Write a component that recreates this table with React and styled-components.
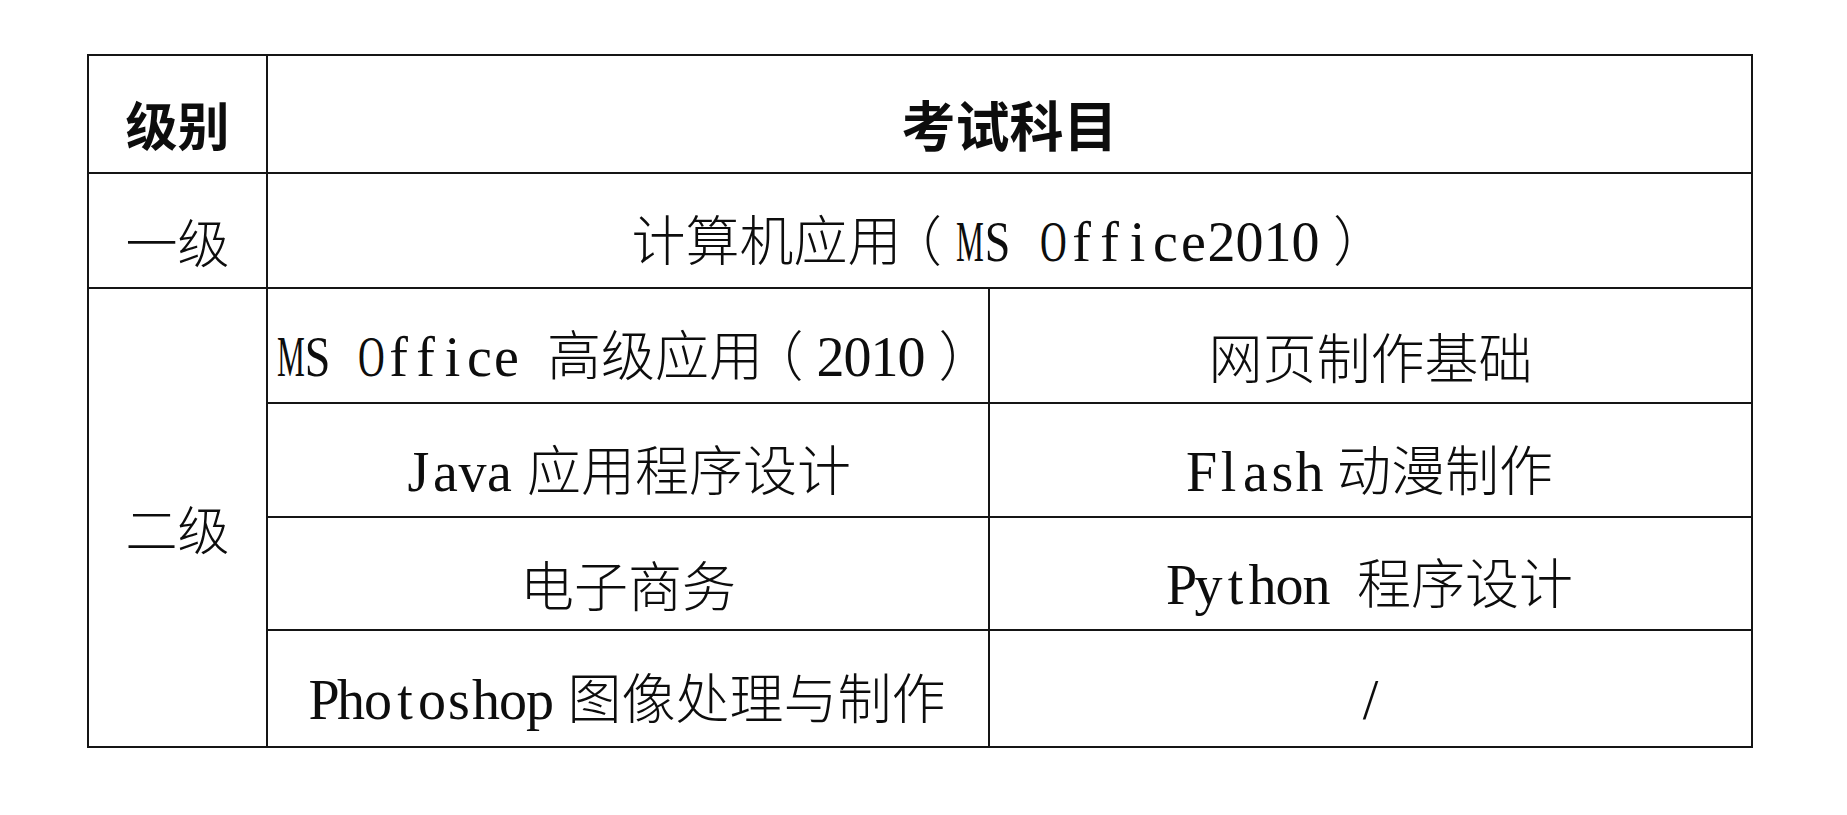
import React from 'react';
import styled, { createGlobalStyle } from 'styled-components';

const GlobalStyle = createGlobalStyle`
  html, body { margin: 0; padding: 0; background: #ffffff; }
  body { font-family: "Noto Sans CJK SC", sans-serif; color: #0d0d0d; }
`;

const Page = styled.div`
  width: 1847px;
  height: 815px;
  box-sizing: border-box;
  padding: 54px 0 0 87px;
  background: #ffffff;
`;

const Grid = styled.div`
  display: grid;
  grid-template-columns: 179px 722px 763px;
  grid-template-rows: 118px 115px 115px 114px 113px 117px;
  width: max-content;
  border-top: 2px solid #151515;
  border-left: 2px solid #151515;
`;

const Cell = styled.div`
  grid-column: ${(p) => p.$col || 'auto'};
  grid-row: ${(p) => p.$row || 'auto'};
  display: flex;
  align-items: center;
  justify-content: center;
  box-sizing: border-box;
  border-right: 2px solid #151515;
  border-bottom: 2px solid #151515;
  padding-top: 20px;
  padding-right: ${(p) => p.$shift || 0}px;
  font-family: "Noto Sans CJK SC", sans-serif;
  font-size: ${(p) => p.$size || 54}px;
  font-weight: ${(p) => (p.$bold ? 700 : 300)};
  line-height: 1;
  white-space: nowrap;
`;

const Line = styled.span`
  display: block;
  white-space: nowrap;
`;

const MonoCell = styled.span`
  display: inline-flex;
  justify-content: center;
  width: ${(p) => p.$w}px;
  font-family: "Liberation Serif", serif;
  font-size: 56px;
  font-weight: 400;
`;

const Shape = styled.span`
  display: inline-block;
  transform: scaleX(${(p) => p.$sx});
`;

const Gap = styled.span`
  display: inline-block;
  width: ${(p) => p.$w}px;
`;

const ParenBox = styled.span`
  display: inline-flex;
  justify-content: center;
  width: ${(p) => p.$w || 54}px;
`;

const ParenGlyph = styled.span`
  font-feature-settings: "halt" 1;
`;

const SCALE = { M: 0.56, O: 0.66, S: 0.82, W: 0.56 };

function Latin({ text, w = 27 }) {
  return (
    <>
      {Array.from(text).map((ch, i) => (
        <MonoCell key={i} $w={w}>
          <Shape $sx={SCALE[ch] || 1}>{ch === ' ' ? '\u00a0' : ch}</Shape>
        </MonoCell>
      ))}
    </>
  );
}

function Paren({ children, w }) {
  return (
    <ParenBox $w={w}>
      <ParenGlyph>{children}</ParenGlyph>
    </ParenBox>
  );
}

export default function App() {
  return (
    <>
      <GlobalStyle />
      <Page>
        <Grid>
          <Cell $col="1" $row="1" $size={52} $bold>
            <Line>级别</Line>
          </Cell>
          <Cell $col="2 / 4" $row="1" $bold>
            <Line>考试科目</Line>
          </Cell>

          <Cell $col="1" $row="2" $size={52}>
            <Line>一级</Line>
          </Cell>
          <Cell $col="2 / 4" $row="2" $shift={14}>
            <Line>
              计算机应用<Paren>（</Paren>
              <Latin text="MS Office2010" w={28} />
              <Paren>）</Paren>
            </Line>
          </Cell>

          <Cell $col="1" $row="3 / 7" $size={52}>
            <Line>二级</Line>
          </Cell>

          <Cell $col="2" $row="3">
            <Line>
              <Latin text="MS Office " />高级应用<Paren>（</Paren>
              <Latin text="2010" />
              <Paren>）</Paren>
            </Line>
          </Cell>
          <Cell $col="3" $row="3">
            <Line>网页制作基础</Line>
          </Cell>

          <Cell $col="2" $row="4">
            <Line>
              <Latin text="Java" />
              <Gap $w={14} />
              应用程序设计
            </Line>
          </Cell>
          <Cell $col="3" $row="4">
            <Line>
              <Latin text="Flash" />
              <Gap $w={14} />
              动漫制作
            </Line>
          </Cell>

          <Cell $col="2" $row="5">
            <Line>电子商务</Line>
          </Cell>
          <Cell $col="3" $row="5">
            <Line>
              <Latin text="Python " />程序设计
            </Line>
          </Cell>

          <Cell $col="2" $row="6">
            <Line>
              <Latin text="Photoshop" />
              <Gap $w={14} />
              图像处理与制作
            </Line>
          </Cell>
          <Cell $col="3" $row="6">
            <Line>
              <Latin text="/" />
            </Line>
          </Cell>
        </Grid>
      </Page>
    </>
  );
}
